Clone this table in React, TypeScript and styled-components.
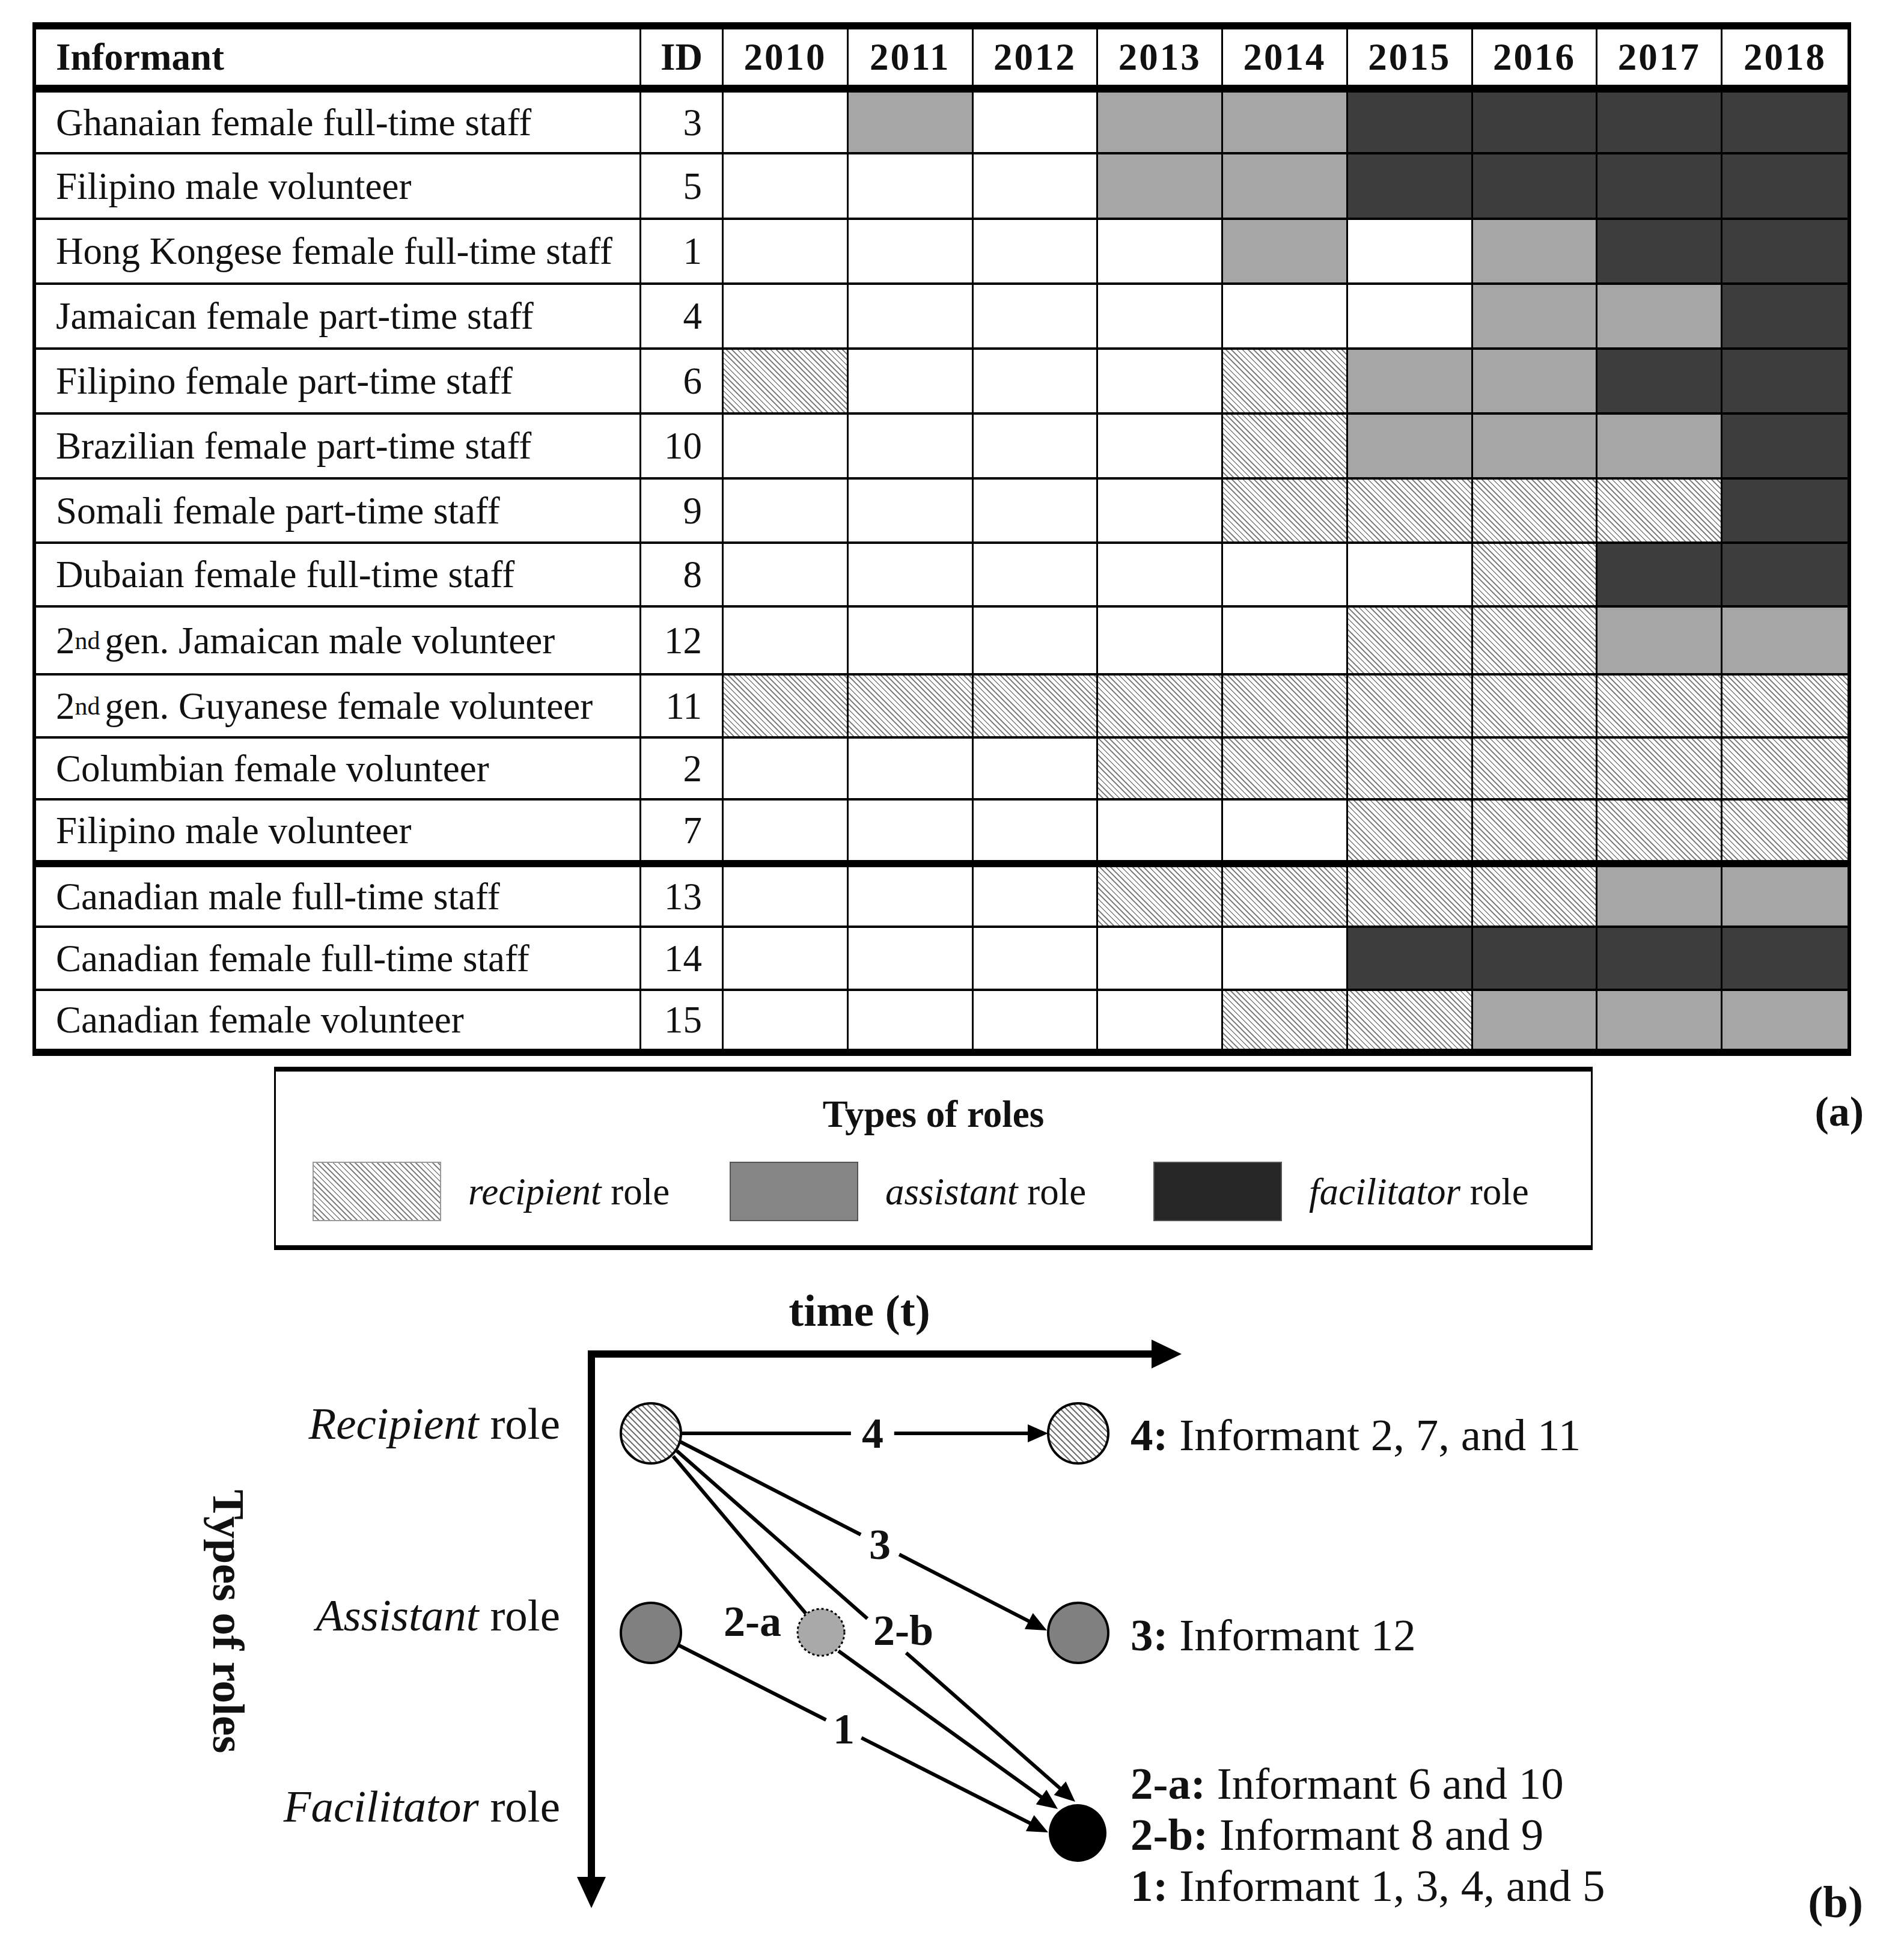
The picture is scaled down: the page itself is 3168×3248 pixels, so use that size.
import React from "react";
import styled, { createGlobalStyle } from "styled-components";

type Role = "W" | "R" | "A" | "F";

const GlobalStyle = createGlobalStyle`
  html, body { margin: 0; padding: 0; background: #ffffff; }
  body {
    font-family: "Liberation Serif", "Times New Roman", serif;
    color: #111111;
  }
`;

const HATCH =
  "repeating-linear-gradient(45deg, #ffffff 0px, #ffffff 4.6px, #858585 4.6px, #858585 6.5px)";

const fillFor = (r?: Role) => {
  switch (r) {
    case "A":
      return "#a6a6a6";
    case "F":
      return "#3d3d3d";
    case "R":
      return HATCH;
    default:
      return "#ffffff";
  }
};

const Page = styled.div`
  width: 3168px;
  height: 3248px;
  box-sizing: border-box;
  padding-top: 37px;
  overflow: hidden;
  background: #ffffff;
`;

/* ---------- table (a) ---------- */

const Table = styled.div`
  margin-left: 54px;
  width: 3026px;
  box-sizing: border-box;
  border-style: solid;
  border-color: #000;
  border-width: 12px 6px 12px 6px;
  font-size: 63px;
  line-height: 72px;
`;

const Row = styled.div<{ $h: number; $border: number }>`
  display: grid;
  grid-template-columns: 1007px 137px repeat(9, 1fr);
  height: ${(p) => p.$h}px;
  box-sizing: border-box;
  border-bottom: ${(p) => p.$border}px solid #000;
`;

const Cell = styled.div<{ $fill?: Role }>`
  box-sizing: border-box;
  border-right: 3px solid #000;
  display: flex;
  align-items: center;
  background: ${(p) => fillFor(p.$fill)};
  white-space: nowrap;
  &:last-child {
    border-right: none;
  }
`;

const NameCell = styled(Cell)`
  padding-left: 33px;
`;

const IdCell = styled(Cell)`
  justify-content: flex-end;
  padding-right: 33px;
`;

const HeadCell = styled(Cell)<{ $align: "start" | "center" }>`
  font-weight: 700;
  justify-content: ${(p) => (p.$align === "start" ? "flex-start" : "center")};
  padding-left: ${(p) => (p.$align === "start" ? "33px" : "0")};
`;

const YearText = styled.span`
  letter-spacing: 3px;
`;

const Sup = styled.span`
  font-size: 42px;
  line-height: 0;
  vertical-align: 23px;
  margin-right: 8px;
`;

/* ---------- legend ---------- */

const LegendRow = styled.div`
  display: flex;
  align-items: flex-start;
  margin-top: 18px;
  height: 305px;
`;

const LegendBox = styled.div`
  margin-left: 456px;
  width: 2194px;
  height: 305px;
  box-sizing: border-box;
  border-style: solid;
  border-color: #000;
  border-width: 8px 3px 8px 3px;
  display: flex;
  flex-direction: column;
  align-items: center;
  padding-top: 35px;
`;

const LegendTitle = styled.div`
  font-weight: 700;
  font-size: 63px;
  line-height: 72px;
`;

const LegendItems = styled.div`
  align-self: stretch;
  display: flex;
  margin-top: 43px;
  padding-left: 61px;
`;

const LegendItem = styled.div<{ $w: number }>`
  width: ${(p) => p.$w}px;
  display: flex;
  align-items: center;
  gap: 45px;
  font-size: 63px;
  line-height: 72px;
  white-space: nowrap;
`;

const Swatch = styled.div<{ $kind: Role }>`
  width: 214px;
  height: 99px;
  box-sizing: border-box;
  border: 2px solid ${(p) => (p.$kind === "R" ? "#9a9a9a" : "#555555")};
  background: ${(p) =>
    p.$kind === "A" ? "#858585" : p.$kind === "F" ? "#262626" : HATCH};
`;

const PanelTag = styled.div<{ $top: number }>`
  margin-left: auto;
  margin-right: 67px;
  margin-top: ${(p) => p.$top}px;
  font-weight: 700;
  font-size: 70px;
  line-height: 76px;
`;

/* ---------- diagram (b) ---------- */

const Canvas = styled.div`
  position: relative;
  width: 3168px;
  height: 1148px;
  margin-top: 20px;
`;

const DiagramSvg = styled.svg`
  position: absolute;
  left: 0;
  top: 0;
`;

const EdgeLabel = styled.text`
  font-family: "Liberation Serif", "Times New Roman", serif;
  font-weight: 700;
  font-size: 72px;
  text-anchor: middle;
  dominant-baseline: central;
  fill: #111;
`;

const FreeText = styled.div<{
  $x: number;
  $y: number;
  $anchor: "start" | "middle" | "end";
  $bold?: boolean;
}>`
  position: absolute;
  left: ${(p) => p.$x}px;
  top: ${(p) => p.$y}px;
  transform: translate(
    ${(p) => (p.$anchor === "start" ? "0" : p.$anchor === "middle" ? "-50%" : "-100%")},
    -50%
  );
  font-size: 75px;
  line-height: 1;
  white-space: nowrap;
  font-weight: ${(p) => (p.$bold ? 700 : 400)};
`;

const VerticalTitle = styled.div<{ $x: number; $y: number }>`
  position: absolute;
  left: ${(p) => p.$x}px;
  top: ${(p) => p.$y}px;
  transform: translate(-50%, -50%);
  writing-mode: vertical-rl;
  font-size: 75px;
  line-height: 1;
  font-weight: 700;
  white-space: nowrap;
`;

const B = styled.b`
  font-weight: 700;
`;

const I = styled.i`
  font-style: italic;
`;

/* ---------- data ---------- */

type Informant = {
  name: React.ReactNode;
  id: number;
  roles: Role[];
  h: number;
  border: number;
};

const r = (s: string) => s.split("") as Role[];

const informants: Informant[] = [
  { name: "Ghanaian female full-time staff", id: 3, roles: r("WAWAAFFFF"), h: 103, border: 4 },
  { name: "Filipino male volunteer", id: 5, roles: r("WWWAAFFFF"), h: 109, border: 4 },
  { name: "Hong Kongese female full-time staff", id: 1, roles: r("WWWWAWAFF"), h: 108, border: 4 },
  { name: "Jamaican female part-time staff", id: 4, roles: r("WWWWWWAAF"), h: 108, border: 4 },
  { name: "Filipino female part-time staff", id: 6, roles: r("RWWWRAAFF"), h: 108, border: 4 },
  { name: "Brazilian female part-time staff", id: 10, roles: r("WWWWRAAAF"), h: 108, border: 4 },
  { name: "Somali female part-time staff", id: 9, roles: r("WWWWRRRRF"), h: 107, border: 4 },
  { name: "Dubaian female full-time staff", id: 8, roles: r("WWWWWWRFF"), h: 106, border: 4 },
  {
    name: (
      <>
        2<Sup>nd</Sup>gen. Jamaican male volunteer
      </>
    ),
    id: 12,
    roles: r("WWWWWRRAA"),
    h: 113,
    border: 4,
  },
  {
    name: (
      <>
        2<Sup>nd</Sup>gen. Guyanese female volunteer
      </>
    ),
    id: 11,
    roles: r("RRRRRRRRR"),
    h: 105,
    border: 4,
  },
  { name: "Columbian female volunteer", id: 2, roles: r("WWWRRRRRR"), h: 103, border: 4 },
  { name: "Filipino male volunteer", id: 7, roles: r("WWWWWRRRR"), h: 111, border: 12 },
  { name: "Canadian male full-time staff", id: 13, roles: r("WWWRRRRAA"), h: 101, border: 4 },
  { name: "Canadian female full-time staff", id: 14, roles: r("WWWWWFFFF"), h: 105, border: 4 },
  { name: "Canadian female volunteer", id: 15, roles: r("WWWWRRAAA"), h: 96, border: 0 },
];

const years = [2010, 2011, 2012, 2013, 2014, 2015, 2016, 2017, 2018];

/* ---------- diagram geometry (page coordinates) ---------- */

type Pt = [number, number];

type Edge = {
  a: Pt;
  b: Pt;
  arrow: boolean;
  gap?: { t: number; half: number };
};

const edges: Edge[] = [
  { a: [1134, 2385], b: [1744, 2385], arrow: true, gap: { t: 0.521, half: 36 } },
  { a: [1130, 2398], b: [1742, 2713], arrow: true, gap: { t: 0.546, half: 36 } },
  { a: [1126, 2414], b: [1789, 2998], arrow: true, gap: { t: 0.527, half: 43 } },
  { a: [1120, 2423], b: [1341, 2685], arrow: false },
  { a: [1395, 2747], b: [1760, 3010], arrow: true },
  { a: [1130, 2738], b: [1744, 3049], arrow: true, gap: { t: 0.446, half: 33 } },
];

const ARROW_LEN = 34;
const ARROW_HALF = 15;

function edgeGeometry(e: Edge) {
  const [ax, ay] = e.a;
  const [bx, by] = e.b;
  const dx = bx - ax;
  const dy = by - ay;
  const L = Math.hypot(dx, dy);
  const ux = dx / L;
  const uy = dy / L;
  const endLen = e.arrow ? L - ARROW_LEN + 2 : L;
  const at = (d: number): Pt => [ax + ux * d, ay + uy * d];
  const segs: [Pt, Pt][] = [];
  if (e.gap) {
    const c = e.gap.t * L;
    segs.push([at(0), at(c - e.gap.half)]);
    segs.push([at(c + e.gap.half), at(endLen)]);
  } else {
    segs.push([at(0), at(endLen)]);
  }
  let head: string | null = null;
  if (e.arrow) {
    const base = at(L - ARROW_LEN);
    const nx = -uy;
    const ny = ux;
    head = [
      `${bx},${by}`,
      `${base[0] + nx * ARROW_HALF},${base[1] + ny * ARROW_HALF}`,
      `${base[0] - nx * ARROW_HALF},${base[1] - ny * ARROW_HALF}`,
    ].join(" ");
  }
  return { segs, head };
}

const Diagram: React.FC = () => (
  <DiagramSvg width={3168} height={1148} viewBox="0 2100 3168 1148">
    <defs>
      <pattern id="nodeHatch" width="10" height="10" patternUnits="userSpaceOnUse">
        <rect width="10" height="10" fill="#ffffff" />
        <path d="M-1,-1 L11,11 M-1,9 L1,11 M9,-1 L11,1" stroke="#6a6a6a" strokeWidth="2" />
      </pattern>
    </defs>

    {/* axes */}
    <path
      d="M984 3126 L984 2253 L1920 2253"
      fill="none"
      stroke="#000"
      strokeWidth="12"
      strokeLinejoin="miter"
    />
    <polygon points="1916,2229 1966,2253 1916,2277" fill="#000" />
    <polygon points="960,3123 984,3175 1008,3123" fill="#000" />

    {/* edges */}
    {edges.map((e, i) => {
      const g = edgeGeometry(e);
      return (
        <g key={i}>
          {g.segs.map(([p, q], j) => (
            <line
              key={j}
              x1={p[0]}
              y1={p[1]}
              x2={q[0]}
              y2={q[1]}
              stroke="#000"
              strokeWidth="6"
            />
          ))}
          {g.head && <polygon points={g.head} fill="#000" />}
        </g>
      );
    })}

    {/* nodes */}
    <circle cx={1083} cy={2385} r={50} fill="url(#nodeHatch)" stroke="#000" strokeWidth="4" />
    <circle cx={1794} cy={2385} r={50} fill="url(#nodeHatch)" stroke="#000" strokeWidth="4" />
    <circle cx={1083} cy={2717} r={50} fill="#808080" stroke="#000" strokeWidth="4" />
    <circle cx={1794} cy={2717} r={50} fill="#808080" stroke="#000" strokeWidth="4" />
    <circle
      cx={1366}
      cy={2716}
      r={39}
      fill="#a9a9a9"
      stroke="#000"
      strokeWidth="3"
      strokeDasharray="4 4"
    />
    <circle cx={1793} cy={3050} r={48} fill="#000" />

    {/* edge labels */}
    <EdgeLabel x={1452} y={2385}>4</EdgeLabel>
    <EdgeLabel x={1464} y={2570}>3</EdgeLabel>
    <EdgeLabel x={1252} y={2698}>2-a</EdgeLabel>
    <EdgeLabel x={1503} y={2713}>2-b</EdgeLabel>
    <EdgeLabel x={1404} y={2877}>1</EdgeLabel>
  </DiagramSvg>
);

/* ---------- app ---------- */

export default function App() {
  return (
    <>
      <GlobalStyle />
      <Page>
        <Table>
          <Row $h={105} $border={13}>
            <HeadCell $align="start">Informant</HeadCell>
            <HeadCell $align="center">ID</HeadCell>
            {years.map((y) => (
              <HeadCell key={y} $align="center">
                <YearText>{y}</YearText>
              </HeadCell>
            ))}
          </Row>
          {informants.map((inf, i) => (
            <Row key={i} $h={inf.h} $border={inf.border}>
              <NameCell>{inf.name}</NameCell>
              <IdCell>{inf.id}</IdCell>
              {inf.roles.map((role, j) => (
                <Cell key={j} $fill={role} />
              ))}
            </Row>
          ))}
        </Table>

        <LegendRow>
          <LegendBox>
            <LegendTitle>Types of roles</LegendTitle>
            <LegendItems>
              <LegendItem $w={694}>
                <Swatch $kind="R" />
                <span>
                  <I>recipient</I> role
                </span>
              </LegendItem>
              <LegendItem $w={705}>
                <Swatch $kind="A" />
                <span>
                  <I>assistant</I> role
                </span>
              </LegendItem>
              <LegendItem $w={700}>
                <Swatch $kind="F" />
                <span>
                  <I>facilitator</I> role
                </span>
              </LegendItem>
            </LegendItems>
          </LegendBox>
          <PanelTag $top={37}>(a)</PanelTag>
        </LegendRow>

        <Canvas>
          <Diagram />
          <FreeText $x={1430} $y={80} $anchor="middle" $bold>
            time (t)
          </FreeText>
          <VerticalTitle $x={380} $y={598}>
            Types of roles
          </VerticalTitle>
          <FreeText $x={932} $y={268} $anchor="end">
            <I>Recipient</I> role
          </FreeText>
          <FreeText $x={932} $y={587} $anchor="end">
            <I>Assistant</I> role
          </FreeText>
          <FreeText $x={932} $y={905} $anchor="end">
            <I>Facilitator</I> role
          </FreeText>
          <FreeText $x={1881} $y={287} $anchor="start">
            <B>4:</B> Informant 2, 7, and 11
          </FreeText>
          <FreeText $x={1881} $y={620} $anchor="start">
            <B>3:</B> Informant 12
          </FreeText>
          <FreeText $x={1881} $y={867} $anchor="start">
            <B>2-a:</B> Informant 6 and 10
          </FreeText>
          <FreeText $x={1881} $y={952} $anchor="start">
            <B>2-b:</B> Informant 8 and 9
          </FreeText>
          <FreeText $x={1881} $y={1037} $anchor="start">
            <B>1:</B> Informant 1, 3, 4, and 5
          </FreeText>
          <FreeText $x={3100} $y={1064} $anchor="end" $bold>
            (b)
          </FreeText>
        </Canvas>
      </Page>
    </>
  );
}
